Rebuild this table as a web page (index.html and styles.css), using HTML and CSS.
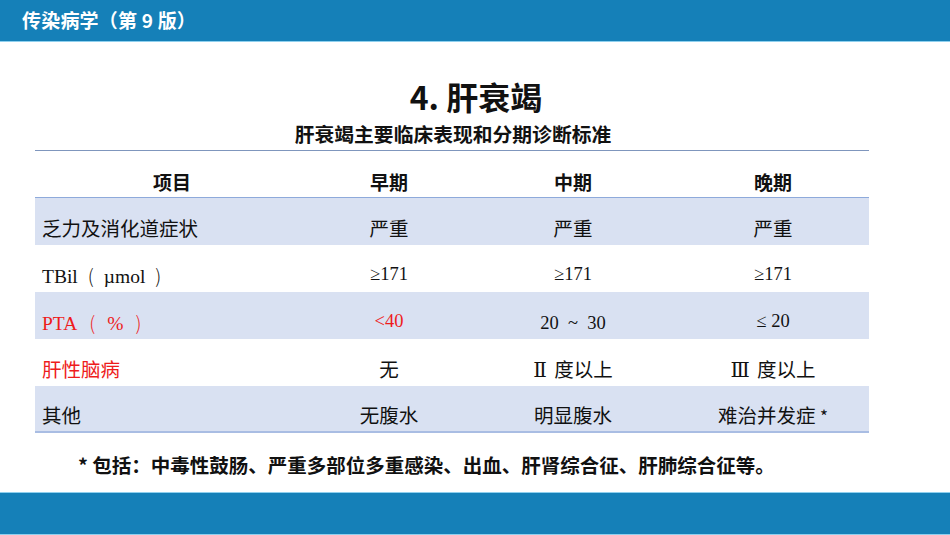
FILE: index.html
```html
<!DOCTYPE html>
<html lang="zh-CN">
<head>
<meta charset="utf-8">
<title>肝衰竭</title>
<link rel="stylesheet" href="styles.css">
</head>
<body>
<div class="slide">
  <header class="topbar"><span class="book">传染病学（第 9 版）</span></header>
  <main class="content">
    <h1 class="title">4. 肝衰竭</h1>
    <h2 class="subtitle">肝衰竭主要临床表现和分期诊断标准</h2>
    <table class="grid">
      <colgroup>
        <col class="c1"><col class="c2"><col class="c3"><col class="c4">
      </colgroup>
      <thead>
        <tr><th>项目</th><th>早期</th><th>中期</th><th>晚期</th></tr>
      </thead>
      <tbody>
        <tr class="shade"><td class="item">乏力及消化道症状</td><td>严重</td><td>严重</td><td>严重</td></tr>
        <tr><td class="item latin">TBil<span class="paren">(</span>µmol<span class="paren">)</span></td><td class="latin">≥171</td><td class="latin">≥171</td><td class="latin">≥171</td></tr>
        <tr class="shade"><td class="item latin red">PTA<span class="paren wide">(</span>%<span class="paren wide">)</span></td><td class="latin red">&lt;40</td><td class="latin low">20 &nbsp;~ &nbsp;30</td><td class="latin">≤ 20</td></tr>
        <tr><td class="item red">肝性脑病</td><td>无</td><td><span class="roman">Ⅱ</span> 度以上</td><td><span class="roman">Ⅲ</span> 度以上</td></tr>
        <tr class="shade last"><td class="item">其他</td><td>无腹水</td><td>明显腹水</td><td>难治并发症 <span class="star">*</span></td></tr>
      </tbody>
    </table>
    <p class="note">* 包括：中毒性鼓肠、严重多部位多重感染、出血、肝肾综合征、肝肺综合征等。</p>
  </main>
  <footer class="bottombar"></footer>
</div>
</body>
</html>
```

FILE: styles.css
```css
html, body {
  margin: 0;
  padding: 0;
  background: #ffffff;
}

.slide {
  width: 950px;
  height: 535px;
  display: flex;
  flex-direction: column;
  font-family: "Noto Sans CJK SC", "Noto Sans", sans-serif;
  color: #111;
  overflow: hidden;
}

.topbar {
  height: 41px;
  background: #1580b8;
  border-bottom: 1px solid #8fd0ee;
  display: flex;
  align-items: center;
  padding-left: 22px;
  flex: none;
}

.book {
  color: #ffffff;
  font-weight: bold;
  font-size: 19px;
  letter-spacing: 0.2px;
  line-height: 1;
  margin-top: -2px;
}

.content {
  flex: 1;
  display: flex;
  flex-direction: column;
  align-items: center;
  padding-top: 34px;
}

.title {
  margin: 0;
  font-size: 32px;
  line-height: 40px;
  font-weight: bold;
  color: #111;
  padding-left: 2px;
}

.subtitle {
  margin: 5px 44px 0 0;
  font-size: 19.8px;
  line-height: 26px;
  font-weight: bold;
  color: #111;
}

.grid {
  align-self: flex-start;
  margin: 3px 0 0 35px;
  width: 834px;
  border-collapse: collapse;
  table-layout: fixed;
  border-top: 1px solid #7f96bd;
}

.c1 { width: 274px; }
.c2 { width: 160px; }
.c3 { width: 208px; }
.c4 { width: 192px; }

.grid th {
  height: 47px;
  padding: 14px 0 0;
  font-size: 19px;
  font-weight: bold;
  text-align: center;
  vertical-align: middle;
  border-bottom: 1px solid #8eaadb;
  box-sizing: border-box;
}

.grid td {
  height: 47px;
  padding: 13px 0 0;
  font-size: 19.5px;
  text-align: center;
  vertical-align: middle;
  box-sizing: border-box;
  color: #111;
}

.grid td.item {
  text-align: left;
  padding-left: 7px;
}

.grid td.latin {
  font-family: "Liberation Serif", "Times New Roman", serif;
  font-size: 18.5px;
}

.grid td.item.latin {
  font-size: 19.5px;
}

.paren {
  font-family: "Noto Sans CJK SC", sans-serif;
  font-weight: 300;
  font-size: 19px;
  margin: 0 10px;
}

.paren.wide {
  margin: 0 12px;
}

.grid td.low {
  padding-top: 17px;
}

.grid .red {
  color: #ee1c1c;
}

.shade td {
  background: #d9e1f2;
}

.last td {
  height: 46px;
  border-bottom: 2px solid #a9bde3;
}

.roman {
  font-family: "DejaVu Serif", "Liberation Serif", serif;
  font-size: 20px;
  margin-right: 3px;
}

.star {
  font-size: 17px;
}

.note {
  margin: 19px 0 0;
  align-self: flex-start;
  padding-left: 78px;
  font-size: 19.5px;
  line-height: 26px;
  font-weight: bold;
  color: #111;
}

.bottombar {
  flex: none;
  height: 41px;
  background: #1580b8;
  border-top: 1px solid #8fd0ee;
  border-bottom: 1px solid #8fd0ee;
}
```
